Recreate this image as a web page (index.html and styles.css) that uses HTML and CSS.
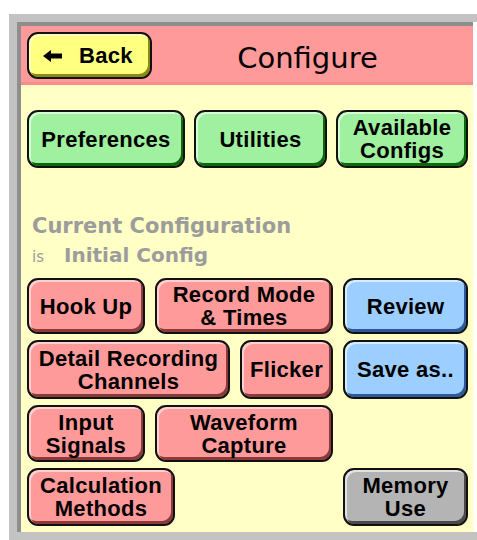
FILE: index.html
```html
<!DOCTYPE html>
<html lang="en">
<head>
    <meta charset="UTF-8">
    <meta name="viewport" content="width=device-width, initial-scale=1.0">
    <title>Configure</title>
    <link rel="stylesheet" href="styles.css">
</head>
<body>

    <div class="frame">
        <div class="screen">
            <div class="header">
                <button class="btn back">
                    <svg class="arrow" width="19" height="12" viewBox="0 0 19 12">
                        <path d="M0 6 L8 0 L8 3.5 L19 3.5 L19 8.5 L8 8.5 L8 12 Z" fill="#000"/>
                    </svg>
                    Back
                </button>
                <h1 class="title">Configure</h1>
            </div>

            <div class="content">
                <div class="top-row">
                    <button class="btn green w-pref">Preferences</button>
                    <button class="btn green w-util">Utilities</button>
                    <button class="btn green w-avail">Available<br>Configs</button>
                </div>

                <div class="current">
                    <div class="current-title">Current Configuration</div>
                    <div><span class="is">is</span> Initial Config</div>
                </div>

                <div class="grid">
                    <div class="row">
                        <button class="btn pink w-short">Hook Up</button>
                        <button class="btn pink w-long">Record Mode<br>&amp; Times</button>
                    </div>
                    <button class="btn blue">Review</button>

                    <div class="row">
                        <button class="btn pink w-detail">Detail Recording<br>Channels</button>
                        <button class="btn pink w-flicker">Flicker</button>
                    </div>
                    <button class="btn blue">Save as..</button>

                    <div class="row">
                        <button class="btn pink w-short">Input<br>Signals</button>
                        <button class="btn pink w-long">Waveform<br>Capture</button>
                    </div>
                    <div></div>

                    <div class="row">
                        <button class="btn pink w-calc">Calculation<br>Methods</button>
                    </div>
                    <button class="btn gray">Memory<br>Use</button>
                </div>
            </div>
        </div>
    </div>

</body>
</html>
```

FILE: styles.css
```css
* {
    box-sizing: border-box;
}
body {
    margin: 0;
    background: #fff;
    font-family: "Liberation Sans", Arial, sans-serif;
}
.frame {
    margin: 14px 0 0 9px;
    border-top: 8px solid #c3c3c3;
    border-left: 8px solid #c3c3c3;
    border-bottom: 10px solid #c3c3c3;
}
.screen {
    margin-right: 4px;
    border-top: 4px solid #8e8e8e;
    border-left: 4px solid #8e8e8e;
    background: #ffffc6;
}
.header {
    display: flex;
    align-items: flex-start;
    height: 59px;
    padding: 6px 0 0 6px;
    background: #ff9a9a;
    border-bottom: 3px solid #f88c8c;
}
.title {
    flex: 1;
    margin: 0;
    padding: 3px 10px 0 0;
    text-align: center;
    font-family: "DejaVu Sans", sans-serif;
    font-weight: normal;
    font-size: 29px;
    line-height: 47px;
    color: #000;
}
.btn {
    display: flex;
    align-items: center;
    justify-content: center;
    margin: 0;
    padding: 0;
    border: 2px solid #111;
    border-radius: 11px;
    font-family: "Liberation Sans", Arial, sans-serif;
    font-weight: bold;
    font-size: 22px;
    letter-spacing: 0.3px;
    line-height: 23px;
    text-align: center;
    color: #000;
    cursor: pointer;
}
.back {
    width: 125px;
    height: 47px;
    justify-content: flex-start;
    padding-left: 14px;
    background: #ffff80;
    box-shadow: inset 2px 2px 0 #ffffc0, inset -2px -3px 0 #8a8a10;
}
.arrow {
    margin-right: 17px;
}
.green {
    background: #9ff09f;
    box-shadow: inset 2px 2px 0 #d4ffd4, inset -2px -3px 0 #0a6a0a;
}
.pink {
    background: #ff9a9a;
    box-shadow: inset 2px 2px 0 #ffd0d0, inset -2px -3px 0 #8a3a3a;
}
.blue {
    background: #9ccfff;
    box-shadow: inset 2px 2px 0 #d8ecff, inset -2px -3px 0 #2c5a98;
}
.gray {
    background: #b4b4b4;
    box-shadow: inset 2px 2px 0 #e2e2e2, inset -2px -3px 0 #4a4a4a;
}
.content {
    padding: 25px 5px 6px 6px;
}
.top-row {
    display: flex;
    gap: 9px;
    height: 58px;
}
.w-pref { width: 158px; }
.w-util { width: 133px; }
.w-avail { width: 132px; }
.current {
    margin: 44px 0 6px 5px;
    font-family: "DejaVu Sans", sans-serif;
    font-weight: bold;
    font-size: 20px;
    line-height: 29px;
    color: #9c9c9c;
}
.current-title {
    font-size: 21px;
}
.is {
    display: inline-block;
    width: 25px;
    font-weight: normal;
    font-size: 15px;
}
.grid {
    display: grid;
    grid-template-columns: 306px 125px;
    grid-template-rows: 56px 59px 57px 58px;
    column-gap: 10px;
    row-gap: 6px;
}
.row {
    display: flex;
    gap: 10px;
}
.w-short { width: 118px; }
.w-long { width: 178px; }
.w-detail { width: 203px; }
.w-flicker { width: 93px; }
.w-calc { width: 148px; }
```
